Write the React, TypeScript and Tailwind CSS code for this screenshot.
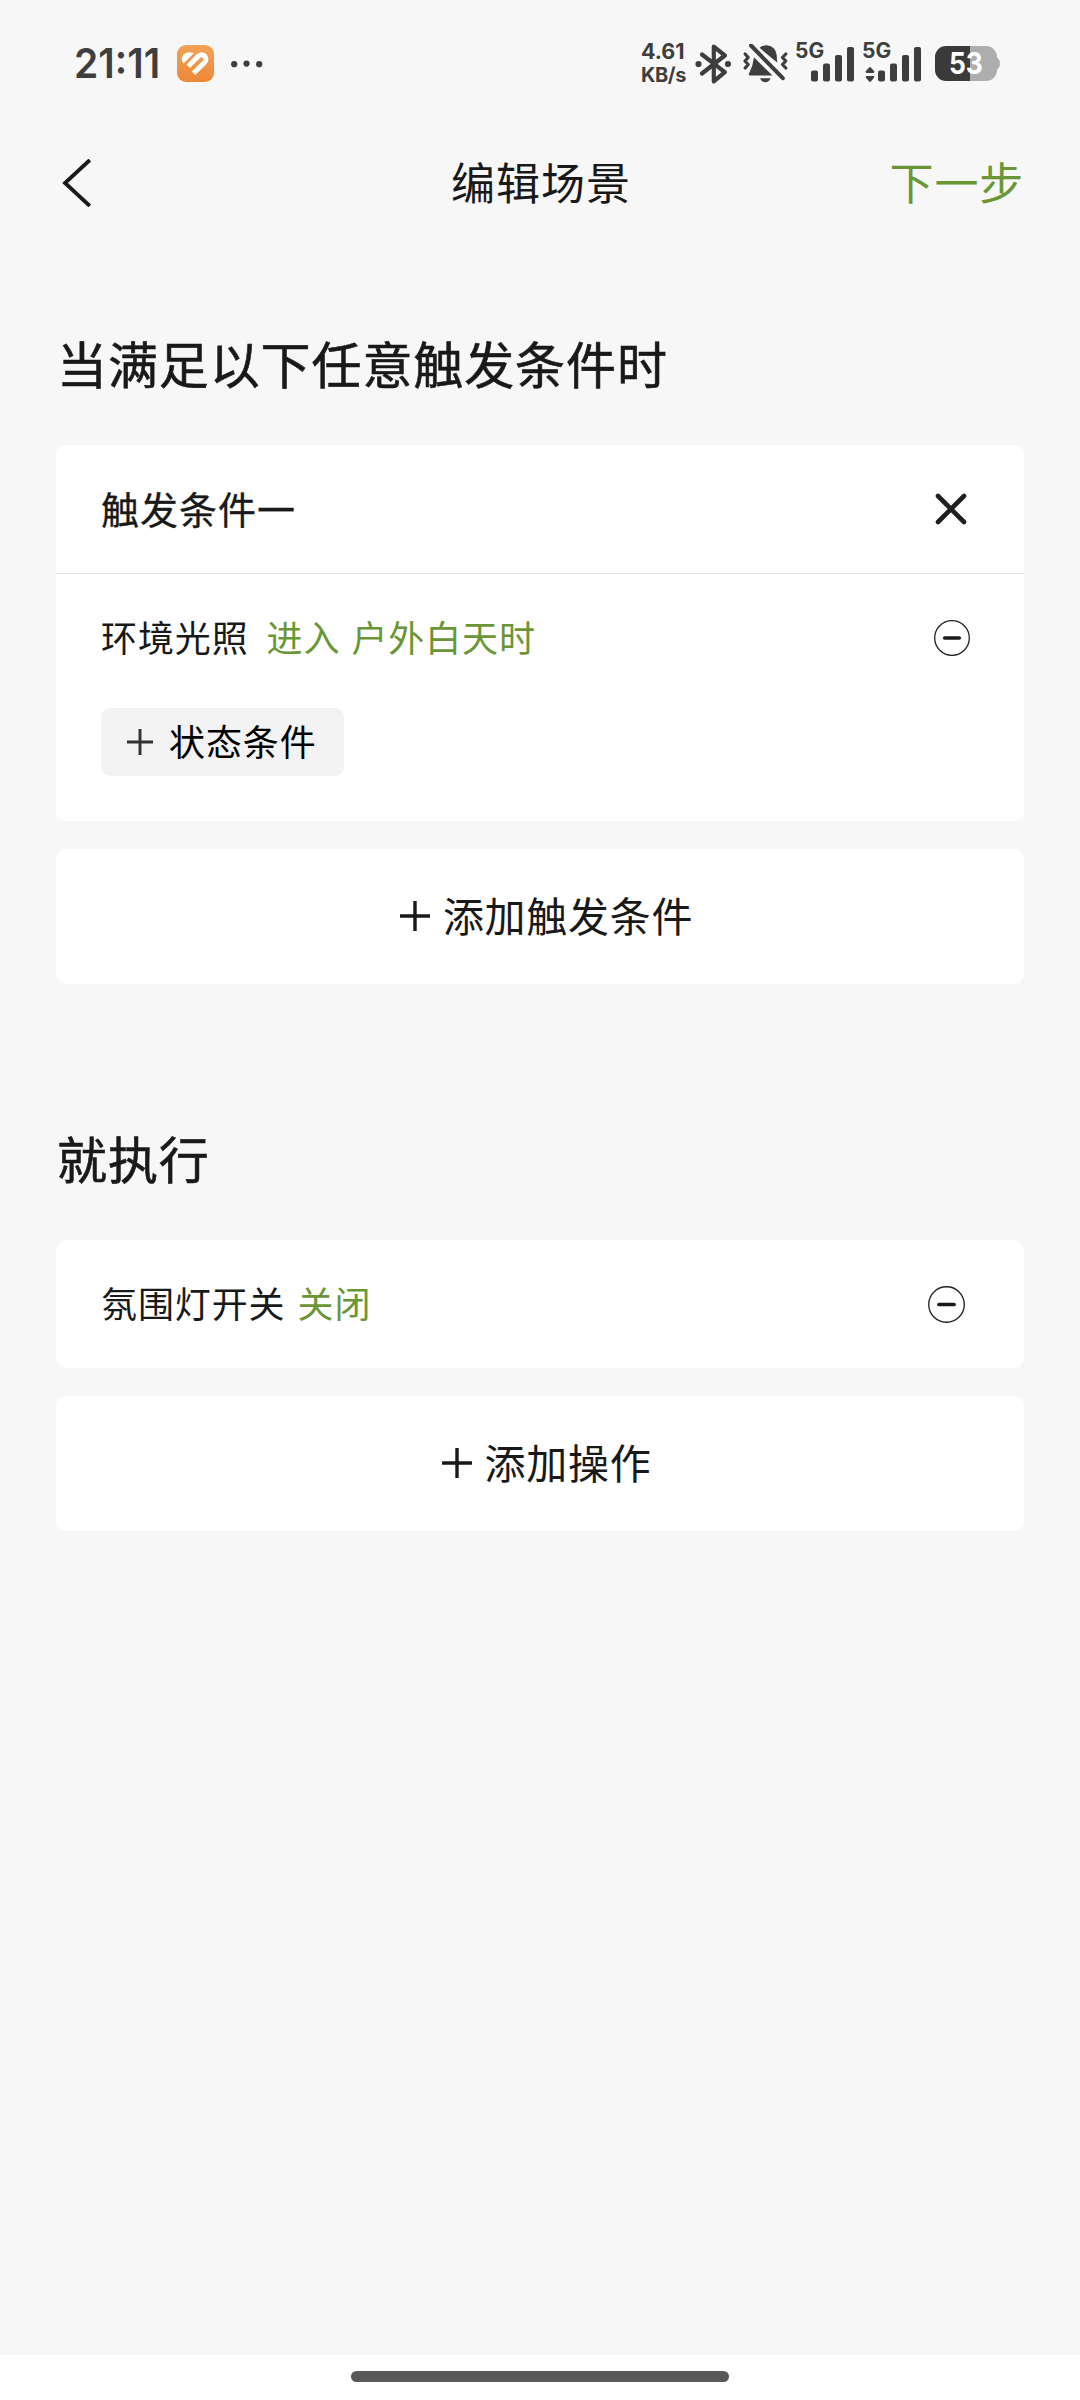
import React from 'react';

const BatteryIcon = () => (
  <svg width="65" height="35" viewBox="0 0 65 35">
    <path d="M60 11.5h1.5q1.5 0 1.8 1.5l1.5 2v5l-1.5 2q-.3 1.5-1.8 1.5H60z" fill="#adadad" />
    <path d="M35 0h16a11 11 0 0 1 11 11v13a11 11 0 0 1-11 11H35z" fill="#adadad" />
    <path d="M11 0h24v35H11A11 11 0 0 1 0 24V11A11 11 0 0 1 11 0z" fill="#3a3a3a" />
  </svg>
);

const BluetoothIcon = () => (
  <svg width="36" height="40" viewBox="0 0 36 40" fill="none">
    <path
      d="M7 10.5L29.8 28.2L18.8 37.3V2.7L29.8 11.5L7 29.5"
      stroke="#3e3e3e"
      strokeWidth="4.2"
      strokeLinejoin="round"
      strokeLinecap="round"
    />
    <circle cx="3.5" cy="20" r="3.1" fill="#3e3e3e" />
    <circle cx="33" cy="20" r="3.1" fill="#3e3e3e" />
  </svg>
);

const MutedBellIcon = () => (
  <svg width="45" height="40" viewBox="0 0 45 40" fill="none">
    <path d="M11 13.3L29.5 31.5H7Q5.2 31.5 6 29.5Q10 22 11 13.3z" fill="#3e3e3e" />
    <path d="M16.5 3.8Q20 1.2 24 1.2Q32.5 2.2 33.7 11L34.2 18.5z" fill="#3e3e3e" />
    <path d="M17 34.2H27.5Q26 38.2 22.3 38.2Q18.5 38.2 17 34.2z" fill="#3e3e3e" />
    <path d="M8 1.5L39.8 34.2" stroke="#3e3e3e" strokeWidth="4" strokeLinecap="round" />
    <path
      d="M2.2 10L5.2 13.5L2 17L5.2 20.5L2.2 24M42.8 10L39.5 13.5L42.8 17L39.5 20.5L42.8 24"
      stroke="#3e3e3e"
      strokeWidth="3.2"
      strokeLinecap="round"
      strokeLinejoin="round"
    />
  </svg>
);

const SignalBars = () => (
  <svg width="43" height="35" viewBox="0 0 43 35" fill="#3e3e3e">
    <rect x="0" y="23.5" width="7" height="11" rx="2" />
    <rect x="12" y="16.5" width="7" height="18" rx="2" />
    <rect x="24" y="8" width="7" height="26.5" rx="2" />
    <rect x="36" y="0" width="7" height="34.5" rx="2" />
  </svg>
);

const DataArrows = () => (
  <svg width="10" height="15" viewBox="0 0 10 15" fill="#3e3e3e">
    <path d="M5 0Q5.8 0 9.3 4.5Q9.5 6 8 6H2Q.5 6 .7 4.5Q4.2 0 5 0z" />
    <path d="M5 15Q4.2 15 .7 10.3Q.5 9 2 9H8Q9.5 9 9.3 10.3Q5.8 15 5 15z" />
  </svg>
);

const HealthAppIcon = () => (
  <svg width="37" height="37" viewBox="0 0 37 37" fill="none">
    <defs>
      <linearGradient id="health" x1="0" y1="0" x2="0" y2="1">
        <stop offset="0" stopColor="#f3a257" />
        <stop offset="1" stopColor="#ed8836" />
      </linearGradient>
    </defs>
    <rect width="37" height="37" rx="9" fill="url(#health)" />
    <path d="M6.3 18.8Q3.3 13.5 6.5 9.8Q10.8 5.8 16.8 8.3z" fill="#fff" />
    <path d="M11.3 21.2L21.7 10.8A4.4 4.4 0 0 1 27.9 17L16.6 28.3" stroke="#fff" strokeWidth="5" />
  </svg>
);

const PlusIcon = ({ size, color = '#191919' }: { size: number; color?: string }) => (
  <svg width={size} height={size} viewBox="0 0 30 30" fill="none">
    <path d="M15 0V30M0 15H30" stroke={color} strokeWidth="3.4" />
  </svg>
);

const RemoveButton = ({ size }: { size: number }) => (
  <button>
    <svg width={size} height={size} viewBox="0 0 36 36" fill="none">
      <circle cx="18" cy="18" r="17.3" stroke="#222" strokeWidth="1.3" />
      <path d="M10.7 18H25.3" stroke="#1a1a1a" strokeWidth="3.6" strokeLinecap="round" />
    </svg>
  </button>
);

const StatusBar = () => (
  <div className="flex h-[127px] items-center justify-between pl-[74px] pr-20 font-['Inter','Noto_Sans_CJK_SC',sans-serif] text-[#3e3e3e]">
    <div className="flex items-center">
      <span className="w-[103px] origin-left scale-x-[0.95] text-[41px] leading-none font-semibold">21:11</span>
      <HealthAppIcon />
      <svg className="ml-[17px]" width="32" height="8" viewBox="0 0 32 8" fill="#3e3e3e">
        <circle cx="3.2" cy="4.2" r="3.1" />
        <circle cx="15.5" cy="3.6" r="3.1" />
        <circle cx="28.2" cy="4.2" r="3.1" />
      </svg>
    </div>

    <div className="flex items-center">
      <div className="w-[54px] pb-0.5 leading-6 font-bold">
        <div className="text-[21.5px]">4.61</div>
        <div className="text-[20px] tracking-[-0.4px]">KB/s</div>
      </div>
      <BluetoothIcon />
      <div className="ml-3">
        <MutedBellIcon />
      </div>
      <div className="ml-2 flex h-[39px] w-[58px] items-end pb-px">
        <span className="mb-[21px] -ml-px w-4 text-[21px] leading-none font-bold">5G</span>
        <SignalBars />
      </div>
      <div className="ml-[9px] flex h-[39px] w-[58px] items-end pb-px">
        <div className="-ml-px flex h-full w-4 flex-col justify-between">
          <span className="-mt-1 text-[21px] leading-none font-bold">5G</span>
          <div className="ml-[3px]">
            <DataArrows />
          </div>
        </div>
        <SignalBars />
      </div>
      <div className="relative ml-3.5">
        <BatteryIcon />
        <span className="absolute top-0 left-[14px] origin-left scale-x-[0.88] text-[30px] leading-[35px] font-bold text-white">
          53
        </span>
      </div>
    </div>
  </div>
);

const Header = () => (
  <div className="grid h-28 grid-cols-3 items-center pl-[62px] pr-[56px]">
    <button className="justify-self-start">
      <svg width="30" height="48" viewBox="0 0 30 48" fill="none">
        <path d="M27.8 1L3 24L27.8 47" stroke="#1a1a1a" strokeWidth="3.8" />
      </svg>
    </button>
    <h1 className="justify-self-center pr-1 pb-[5px] text-[44px] leading-none tracking-[1px]">编辑场景</h1>
    <button className="justify-self-end pb-[5px] text-[44px] leading-none tracking-[0.8px] text-[#6a9636]">下一步</button>
  </div>
);

const AddButton = ({ label }: { label: string }) => (
  <button className="flex h-[135px] w-full items-center justify-center gap-[13px] rounded-[10px] bg-white pb-0.5 pl-[13px]">
    <PlusIcon size={30} />
    <span className="pb-[3px] text-[41px] leading-none tracking-[0.7px]">{label}</span>
  </button>
);

const App: React.FC = () => {
  return (
    <div className="flex h-[2400px] w-[1080px] flex-col bg-[#f7f7f7] font-['Noto_Sans_CJK_SC',sans-serif] text-[#191919]">
      <StatusBar />
      <Header />

      <main className="flex-1 px-14">
        {/* Triggers */}
        <h2 className="mt-24 ml-px h-[110px] text-[50px] leading-[54px] tracking-[0.9px] [-webkit-text-stroke:0.6px]">
          当满足以下任意触发条件时
        </h2>
        <section className="h-[376px] rounded-[10px] bg-white">
          <div className="flex h-[129px] items-center justify-between border-b border-[#e3e3e3] pr-[57px] pl-[45px]">
            <span className="pb-[3px] text-[38px] leading-none tracking-[1px] [-webkit-text-stroke:0.3px]">触发条件一</span>
            <svg width="32" height="32" viewBox="0 0 32 32" fill="none">
              <path d="M3 3L29 29M29 3L3 29" stroke="#1f1f1f" strokeWidth="4.6" strokeLinecap="round" />
            </svg>
          </div>
          <div className="flex h-32 items-center justify-between pr-[54px] pl-[45px] text-[36px] leading-none tracking-[0.9px]">
            <div className="flex pb-[5px]">
              <span>环境光照</span>
              <span className="ml-[18px] text-[#6a9636]">进入</span>
              <span className="ml-[11px] text-[#6a9636]">户外白天时</span>
            </div>
            <RemoveButton size={36} />
          </div>
          <button className="mt-1.5 ml-[45px] flex h-[68px] w-[243px] items-center rounded-[9px] bg-[#f3f3f3] pl-[26px] text-black">
            <PlusIcon size={26} color="#333333" />
            <span className="ml-4 pb-1 text-[36px] leading-none tracking-[0.9px]">状态条件</span>
          </button>
        </section>
        <div className="mt-7">
          <AddButton label="添加触发条件" />
        </div>

        {/* Actions */}
        <h2 className="mt-[146px] ml-px h-[110px] text-[50px] leading-[54px] tracking-[0.9px] [-webkit-text-stroke:0.6px]">
          就执行
        </h2>
        <section className="flex h-32 items-center justify-between rounded-[10px] bg-white pr-[59px] pl-[45px] text-[36px] leading-none tracking-[0.9px]">
          <div className="flex pb-1">
            <span>氛围灯开关</span>
            <span className="ml-3 text-[#6a9636]">关闭</span>
          </div>
          <RemoveButton size={37} />
        </section>
        <div className="mt-7">
          <AddButton label="添加操作" />
        </div>
      </main>

      {/* Gesture bar */}
      <div className="flex h-[45px] justify-center bg-white pt-4">
        <div className="h-[11px] w-[378px] rounded-full bg-[#595959]" />
      </div>
    </div>
  );
};

export default App;
